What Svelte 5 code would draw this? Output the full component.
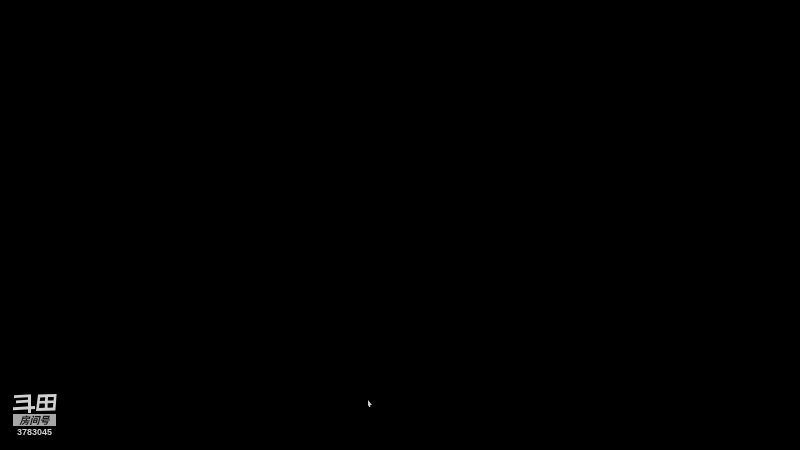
<script>
  const room = '3783045';
</script>

<div class="screen">
  <div class="watermark">
    <svg class="logo" viewBox="0 0 44 19" width="44" height="19" aria-hidden="true">
      <g fill="#d0d0d0">
        <path d="M1 1.2 L15 0.4 L15 3.2 L1 4 Z" />
        <path d="M3 6.4 L15 5.8 L15 8.6 L3 9.2 Z" />
        <path d="M0 13.2 L22 12 L22 15 L0 16.2 Z" />
        <path d="M15 0.4 L18 0.4 L18 19 L15 19 Z" />
        <path d="M25 0.6 L43.6 0 L42.4 16.4 L23 17 Z M27.2 3.4 L26.8 6.9 L32 6.7 L32.2 3.2 Z M35 3.1 L34.8 6.6 L40.6 6.4 L40.8 2.9 Z M26.5 9.6 L26 14 L31.8 13.8 L31.9 9.4 Z M34.7 9.3 L34.6 13.7 L39.9 13.5 L40.3 9.1 Z" fill-rule="evenodd" />
      </g>
    </svg>
    <div class="label">房间号</div>
    <div class="room">{room}</div>
  </div>
</div>

<style>
  :global(body) {
    margin: 0;
    background: #000;
  }

  .screen {
    position: relative;
    width: 800px;
    height: 450px;
    background: #000;
    overflow: hidden;
    display: flex;
    flex-direction: column;
    justify-content: flex-end;
    align-items: flex-start;
    padding: 0 0 13px 13px;
    box-sizing: border-box;
  }

  .screen::after {
    content: '';
    position: absolute;
    left: 368px;
    top: 400px;
    width: 4px;
    height: 7px;
    background: #cfcfcf;
    clip-path: polygon(0 0, 100% 70%, 55% 70%, 60% 100%, 25% 100%, 20% 75%, 0 90%);
  }

  .watermark {
    width: 43px;
    display: flex;
    flex-direction: column;
    align-items: center;
    filter: blur(0.35px);
  }

  .logo {
    display: block;
    margin-bottom: 1px;
  }

  .label {
    width: 43px;
    height: 12px;
    background: #a6a6a6;
    color: #161616;
    font: italic 700 10px/12px "Noto Sans CJK SC", sans-serif;
    text-align: center;
  }

  .room {
    margin-top: 1px;
    color: #d0d0d0;
    font: 700 9px/10px "Liberation Sans", sans-serif;
    text-align: center;
  }
</style>
